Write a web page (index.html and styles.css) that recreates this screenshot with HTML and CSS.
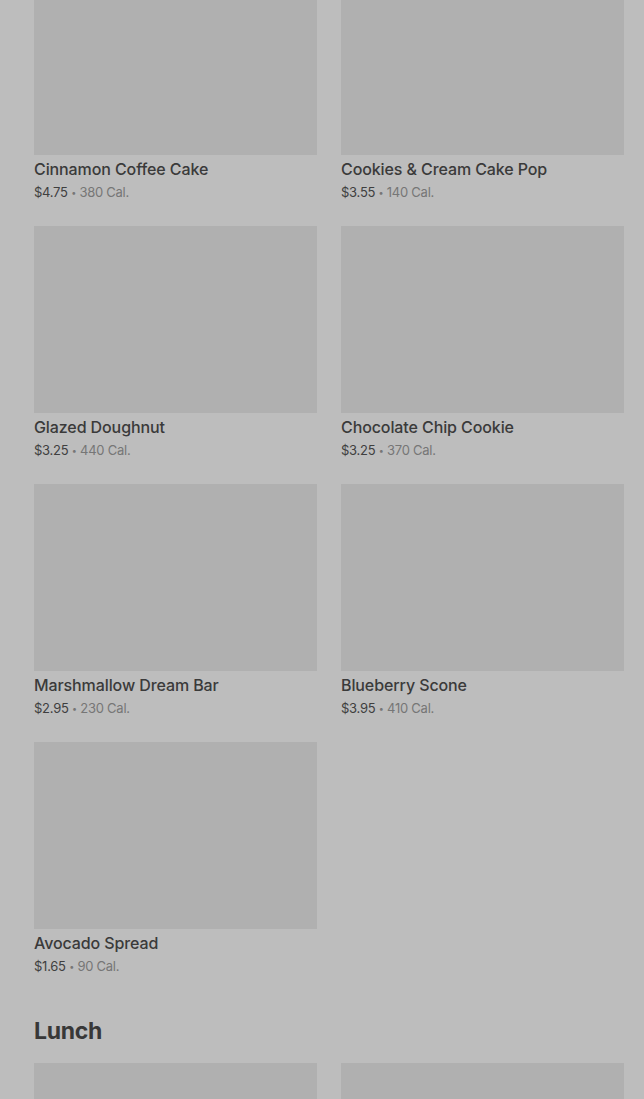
FILE: index.html
```html
<!DOCTYPE html>
<html>
<head>
<meta charset="utf-8">
<link rel="stylesheet" href="styles.css">
</head>
<body>
<main class="page">
  <section class="grid first">
    <article class="card"><div class="img"></div><h3 class="name">Cinnamon Coffee Cake</h3><p class="meta"><span class="price">$4.75</span> <span class="dot">•</span> 380 Cal.</p></article>
    <article class="card"><div class="img"></div><h3 class="name">Cookies &amp; Cream Cake Pop</h3><p class="meta"><span class="price">$3.55</span> <span class="dot">•</span> 140 Cal.</p></article>
    <article class="card"><div class="img"></div><h3 class="name">Glazed Doughnut</h3><p class="meta"><span class="price">$3.25</span> <span class="dot">•</span> 440 Cal.</p></article>
    <article class="card"><div class="img"></div><h3 class="name">Chocolate Chip Cookie</h3><p class="meta"><span class="price">$3.25</span> <span class="dot">•</span> 370 Cal.</p></article>
    <article class="card"><div class="img"></div><h3 class="name">Marshmallow Dream Bar</h3><p class="meta"><span class="price">$2.95</span> <span class="dot">•</span> 230 Cal.</p></article>
    <article class="card"><div class="img"></div><h3 class="name">Blueberry Scone</h3><p class="meta"><span class="price">$3.95</span> <span class="dot">•</span> 410 Cal.</p></article>
    <article class="card"><div class="img"></div><h3 class="name">Avocado Spread</h3><p class="meta"><span class="price">$1.65</span> <span class="dot">•</span> 90 Cal.</p></article>
  </section>
  <h2 class="section-title">Lunch</h2>
  <section class="grid">
    <article class="card"><div class="img"></div></article>
    <article class="card"><div class="img"></div></article>
  </section>
</main>
</body>
</html>
```
FILE: styles.css
```css
html, body {
  margin: 0;
  padding: 0;
  background: #bdbdbd;
  overflow: hidden;
}
body {
  font-family: Inter, "Noto Sans", sans-serif;
  color: #3b3b3b;
}
.page {
  padding: 0 20px 0 34px;
}
.grid {
  display: grid;
  grid-template-columns: 283px 283px;
  column-gap: 24px;
  row-gap: 23px;
}
.grid.first {
  margin-top: -32px;
}
.card {
  display: flex;
  flex-direction: column;
}
.img {
  height: 187px;
  background: #b0b0b0;
}
.name {
  margin: 4px 0 0;
  font-size: 16px;
  line-height: 20px;
  font-weight: 500;
  color: #3a3a3a;
  letter-spacing: -0.1px;
}
.meta {
  margin: 3px 0 0;
  font-size: 13px;
  line-height: 20px;
  color: #767676;
  letter-spacing: -0.25px;
}
.price {
  color: #3f3f3f;
}
.dot {
  font-size: 9px;
  vertical-align: 1px;
}
.section-title {
  margin: 39px 0 17px;
  font-size: 23px;
  line-height: 30px;
  font-weight: 700;
  color: #383838;
  letter-spacing: -0.3px;
}
```
